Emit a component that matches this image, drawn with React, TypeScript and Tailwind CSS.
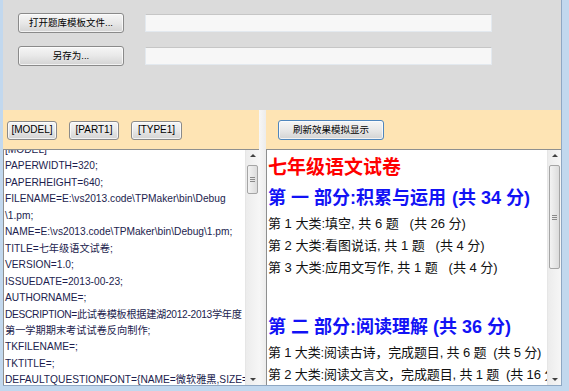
import type { ReactNode } from 'react'

const FONT = "font-['Liberation_Sans','Noto_Sans_CJK_SC',sans-serif]"

const templateLines = [
  '[MODEL]',
  'PAPERWIDTH=320;',
  'PAPERHEIGHT=640;',
  'FILENAME=E:\\vs2013.code\\TPMaker\\bin\\Debug',
  '\\1.pm;',
  'NAME=E:\\vs2013.code\\TPMaker\\bin\\Debug\\1.pm;',
  'TITLE=七年级语文试卷;',
  'VERSION=1.0;',
  'ISSUEDATE=2013-00-23;',
  'AUTHORNAME=;',
  'DESCRIPTION=此试卷模板根据建湖2012-2013学年度',
  '第一学期期末考试试卷反向制作;',
  'TKFILENAME=;',
  'TKTITLE=;',
  'DEFAULTQUESTIONFONT={NAME=微软雅黑,SIZE=',
]

function WinButton({ children, className = '', focused }: { children: ReactNode; className?: string; focused?: boolean }) {
  const border = focused ? 'border-[#4f86bd]' : 'border-[#8a8a8a]'
  return (
    <div
      className={`flex items-center justify-center rounded-[3px] border ${border} bg-linear-to-b from-[#f6f6f6] via-[#e8e8e8] to-[#d3d3d3] text-[9.5px] text-black leading-none shadow-[inset_0_0_0_1px_rgba(255,255,255,0.7)] ${className}`}
    >
      {children}
    </div>
  )
}

function TextBox() {
  return <div className="h-[18px] w-[347px] border border-[#e3e9ef] border-t-[#c6c6c6] bg-[#f7f7f7]" />
}

function ScrollBar({ thumbTop, thumbHeight }: { thumbTop: number; thumbHeight: number }) {
  return (
    <div className="relative w-[14px] h-full bg-linear-to-r from-[#ececec] to-[#f6f6f6] border-l border-[#e6e6e6] shrink-0">
      <div className="absolute top-[4px] left-0 right-0 flex justify-center">
        <div className="w-0 h-0 border-l-[3px] border-r-[3px] border-b-[3px] border-l-transparent border-r-transparent border-b-[#404040]" />
      </div>
      <div
        className="absolute left-[1px] right-[1px] rounded-[2px] border border-[#a5a5a5] bg-linear-to-r from-[#f3f3f3] to-[#dcdcdc] flex flex-col items-center justify-center gap-[1px]"
        style={{ top: thumbTop, height: thumbHeight }}
      >
        <div className="w-[5px] h-px bg-[#8a8a8a]" />
        <div className="w-[5px] h-px bg-[#8a8a8a]" />
        <div className="w-[5px] h-px bg-[#8a8a8a]" />
      </div>
      <div className="absolute bottom-[4px] left-0 right-0 flex justify-center">
        <div className="w-0 h-0 border-l-[3px] border-r-[3px] border-t-[3px] border-l-transparent border-r-transparent border-t-[#404040]" />
      </div>
    </div>
  )
}

function Item({ children, tight }: { children: ReactNode; tight?: boolean }) {
  return (
    <div className={`h-[22px] flex items-center text-[13px] text-[#111] whitespace-pre ${tight ? 'tracking-[-0.15px]' : ''}`}>
      {children}
    </div>
  )
}

function Part({ children }: { children: ReactNode }) {
  return <div className="h-[30px] flex items-center text-[18px] font-bold text-[#1212f5] whitespace-pre">{children}</div>
}

export default function App() {
  return (
    <div className={`w-[569px] h-[391px] bg-[#c2d8ee] pl-[3px] pr-[7px] pb-[5px] flex flex-col overflow-hidden ${FONT}`}>
      <div className="flex-1 flex flex-col border-r border-b border-[#8fa8c4] min-h-0 min-w-0">
        {/* top file bar */}
        <div className="h-[110px] bg-[#dbdbdb] pl-[15px] pt-[13px] flex flex-col gap-[13px] shrink-0">
          <div className="flex items-center gap-[21px]">
            <WinButton className="w-[106px] h-[20px]">打开题库模板文件...</WinButton>
            <TextBox />
          </div>
          <div className="flex items-center gap-[21px]">
            <WinButton className="w-[106px] h-[20px]">另存为...</WinButton>
            <TextBox />
          </div>
        </div>

        <div className="flex-1 flex min-h-0 min-w-0">
          {/* template editor */}
          <div className="w-[256px] flex flex-col shrink-0">
            <div className="h-[39px] bg-[#fee4b4] flex items-center gap-[12px] pl-[4px] pt-[1px] shrink-0">
              <WinButton className="w-[50px] h-[19px] text-[10px]">[MODEL]</WinButton>
              <WinButton className="w-[50px] h-[19px] text-[10px]">[PART1]</WinButton>
              <WinButton className="w-[51px] h-[19px] text-[10px]">[TYPE1]</WinButton>
            </div>
            <div className="flex-1 flex bg-white border-t border-l border-[#8e8f8f] min-h-0">
              <div className="flex-1 min-w-0 overflow-hidden pl-[1px]">
                <div className="-mt-[8px] text-[10.2px] leading-[16.46px] text-[#1c1d4e] whitespace-nowrap">
                  {templateLines.map((line, i) => (
                    <div key={i} className={line.startsWith('DESCRIPTION') ? 'tracking-[-0.3px]' : ''}>
                      {line}
                    </div>
                  ))}
                </div>
              </div>
              <ScrollBar thumbTop={15} thumbHeight={29} />
            </div>
          </div>

          {/* splitter */}
          <div className="w-[7px] bg-linear-to-r from-[#f7f7f7] to-[#ececec] shrink-0" />

          {/* preview */}
          <div className="flex-1 min-w-0 flex flex-col">
            <div className="h-[39px] bg-[#fee4b4] flex items-center pl-[12px] pt-[1px] shrink-0">
              <WinButton focused className="w-[106px] h-[20px]">刷新效果模拟显示</WinButton>
            </div>
            <div className="flex-1 flex bg-white border-t border-l border-[#8e8f8f] min-h-0 min-w-0">
              <div className="flex-1 min-w-0 overflow-hidden pl-[1px] pt-[3px]">
                <div className="h-[30px] flex items-center text-[19px] font-bold text-[#ff0000]">七年级语文试卷</div>
                <Part>
                  第 一 部分:积累与运用<span className="ml-[6px]">(共 34 分)</span>
                </Part>
                <Item>第 1 大类:填空, 共 6 题   (共 26 分)</Item>
                <Item>第 2 大类:看图说话, 共 1 题   (共 4 分)</Item>
                <Item>第 3 大类:应用文写作, 共 1 题   (共 4 分)</Item>
                <div className="h-[33px]" />
                <Part>第 二 部分:阅读理解 (共 36 分)</Part>
                <Item tight>第 1 大类:阅读古诗，完成题目, 共 6 题  (共 5 分)</Item>
                <Item tight>第 2 大类:阅读文言文，完成题目, 共 1 题  (共 16 分)</Item>
              </div>
              <ScrollBar thumbTop={15} thumbHeight={104} />
            </div>
          </div>
        </div>
      </div>
    </div>
  )
}
